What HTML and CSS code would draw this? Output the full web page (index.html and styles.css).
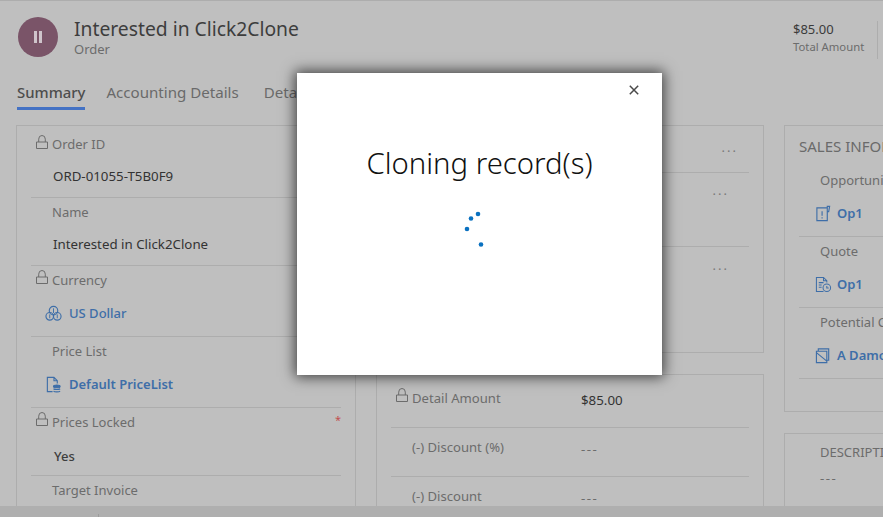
FILE: index.html
```html
<!DOCTYPE html>
<html lang="en">
<head>
<meta charset="utf-8">
<title>Interested in Click2Clone</title>
<link rel="stylesheet" href="styles.css">
</head>
<body>
<svg class="defs" width="0" height="0" aria-hidden="true">
  <symbol id="lock" viewBox="0 0 12 14"><path d="M.5 7h11v6.500H.5zM2.700 7V4.200a3.300 3.700 0 0 1 6.600 0V7" fill="none" stroke="currentColor" stroke-width="1"/></symbol>
</svg>
<div class="page">
  <header class="head">
    <div class="avatar"><span class="pause"></span><span class="pause"></span></div>
    <div class="head-title">
      <h1>Interested in Click2Clone</h1>
      <div class="entity">Order</div>
    </div>
    <div class="head-stat">
      <div class="stat-value">$85.00</div>
      <div class="stat-label">Total Amount</div>
    </div>
  </header>
  <nav class="tabs">
    <span class="tab active">Summary</span>
    <span class="tab">Accounting Details</span>
    <span class="tab tab-last">Details</span>
  </nav>
  <main class="columns">
    <section class="col">
      <div class="card card-a">
        <div class="field r72">
          <div class="label"><svg class="lock"><use href="#lock"/></svg>Order ID</div>
          <div class="value">ORD-01055-T5B0F9</div>
        </div>
        <div class="field r68">
          <div class="label">Name</div>
          <div class="value">Interested in Click2Clone</div>
        </div>
        <div class="field r71">
          <div class="label"><svg class="lock"><use href="#lock"/></svg>Currency</div>
          <div class="value link">
            <svg class="ent" viewBox="0 0 18 18" fill="none" stroke="currentColor" stroke-width="1.200"><circle cx="9" cy="6" r="4.500"/><circle cx="5" cy="12" r="4"/><circle cx="13" cy="12" r="4"/><path d="M9 3.500v5M5 10v4M13 10v4" stroke-width="1"/></svg>
            US Dollar
          </div>
        </div>
        <div class="field r71">
          <div class="label">Price List</div>
          <div class="value link strong">
            <svg class="ent" viewBox="0 0 18 18" fill="none" stroke="currentColor" stroke-width="1.200"><path d="M8 16.500H2.500V1.500h7l3.500 3.500v3M9.500 1.500V5H13"/><ellipse cx="12.500" cy="11" rx="3.500" ry="1.500" fill="currentColor"/><path d="M9 13.500c1 1 6 1 7 0M9 16c1 1 6 1 7 0" /></svg>
            Default PriceList
          </div>
        </div>
        <div class="field r68">
          <div class="label"><svg class="lock"><use href="#lock"/></svg>Prices Locked<span class="req">*</span></div>
          <div class="value yes">Yes</div>
        </div>
        <div class="field last">
          <div class="label">Target Invoice</div>
        </div>
      </div>
    </section>
    <section class="col stack-a">
      <div class="card card-b">
        <div class="more-row first"><span class="more">...</span></div>
        <div class="more-row second"><span class="more">...</span></div>
        <div class="more-row third"><span class="more">...</span></div>
      </div>
      <div class="card card-c">
        <div class="pair">
          <div class="pair-label"><svg class="lock lock-pair"><use href="#lock"/></svg>Detail Amount</div>
          <div class="pair-value">$85.00</div>
        </div>
        <div class="pair">
          <div class="pair-label">(-) Discount (%)</div>
          <div class="pair-value muted">---</div>
        </div>
        <div class="pair last">
          <div class="pair-label">(-) Discount</div>
          <div class="pair-value muted">---</div>
        </div>
      </div>
    </section>
    <section class="col stack-b">
      <div class="card card-d">
        <h2>SALES INFORMATION</h2>
        <div class="side">
          <div class="label">Opportunity</div>
          <div class="value link strong">
            <svg class="ent" viewBox="0 0 18 18" fill="none" stroke="currentColor" stroke-width="1.200"><path d="M13 3H2v13.500h11zM13 7h1.500l1-5.500h-2.500z"/><path d="M7.500 6.500v5M7.500 13v1.200"/></svg>
            Op1
          </div>
        </div>
        <div class="side">
          <div class="label">Quote</div>
          <div class="value link strong">
            <svg class="ent" viewBox="0 0 18 18" fill="none" stroke="currentColor" stroke-width="1.100"><path d="M9 16.500H1.500V1.500H9l3.500 3.500v2M9 1.500V5h3.500"/><path d="M4 7h5M4 9.500h3M4 12h3"/><circle cx="12.500" cy="12.500" r="4"/><path d="M12.500 10.500v2.200h2"/></svg>
            Op1
          </div>
        </div>
        <div class="side">
          <div class="label">Potential Customer</div>
          <div class="value link strong">
            <svg class="ent" viewBox="0 0 18 18" fill="none" stroke="currentColor" stroke-width="1.200"><path d="M1.500 4.500h11v12h-11zM3.500 4.500V2h11v12h-2M1.500 6l11 9"/></svg>
            A Damon
          </div>
        </div>
      </div>
      <div class="card card-e">
        <div class="label">DESCRIPTION</div>
        <div class="value muted">---</div>
      </div>
    </section>
  </main>
  <footer class="foot"><span class="foot-tick"></span></footer>
</div>
<div class="dialog" role="dialog">
  <button class="close" aria-label="Close"><svg viewBox="0 0 10 10" width="10" height="10"><path d="M.8.8l8.400 8.400M9.200.8L.8 9.200" stroke="currentColor" stroke-width="1.500" fill="none"/></svg></button>
  <div class="dialog-title">Cloning record(s)</div>
  <svg class="spinner" viewBox="0 0 24 36" width="24" height="36"><circle cx="15" cy="3" r="2.300"/><circle cx="8" cy="7.500" r="2.300"/><circle cx="4" cy="18" r="2.300"/><circle cx="18" cy="33.500" r="2.300"/></svg>
</div>
</body>
</html>
```
FILE: styles.css
```css
* { box-sizing: border-box; }
html, body { margin: 0; height: 517px; width: 883px; overflow: hidden; }
body { background: #bfbfbf; color: #3b3b3b; font-family: "Noto Sans", "Open Sans", "Liberation Sans", sans-serif; position: relative; }
.defs { position: absolute; }
.page { height: 517px; width: 883px; display: flex; flex-direction: column; border-top: 1px solid #adadad; }

.head { display: flex; align-items: flex-start; height: 68px; padding: 16px 0 0 18px; flex: none; }
.avatar { width: 40px; height: 40px; border-radius: 50%; background: #7a5468; display: flex; align-items: center; justify-content: center; gap: 2px; flex: none; }
.pause { width: 3px; height: 12px; background: #cfc4cb; }
.head-title { margin-left: 16px; }
h1 { margin: 0; font-size: 19.300px; line-height: 24px; font-weight: 400; color: #3d3d3d; }
.entity { font-size: 13px; line-height: 17px; color: #6c6c6c; }
.head-stat { margin: 4px 5px 0 auto; width: 85px; height: 38px; border-right: 1px solid #adadad; }
.stat-value { font-size: 13px; line-height: 16px; color: #3b3b3b; }
.stat-label { font-size: 11.300px; line-height: 20px; color: #6c6c6c; }

.tabs { display: flex; gap: 21px; height: 56px; padding: 12px 0 0 17px; flex: none; }
.tab { font-size: 15.100px; line-height: 22px; height: 29px; color: #6a6a6a; white-space: nowrap; }
.tab.active { font-size: 14.900px; color: #4d4d4d; font-weight: 500; border-bottom: 3px solid #4472c4; }
.tab-last { margin-left: 4px; }

.columns { flex: 1; min-height: 0; overflow: hidden; display: grid; grid-template-columns: 340px 388px 200px; column-gap: 20px; margin-left: 16px; }
.col { min-width: 0; display: flex; flex-direction: column; }
.card { border: 1px solid #adadad; flex: none; }
.card-a { height: 400px; padding: 0 14px; }
.field { border-bottom: 1px solid #adadad; }
.field.last { border-bottom: 0; }
.r72 { height: 72px; }
.r68 { height: 68px; }
.r71 { height: 71px; }
.label { font-size: 13px; line-height: 18px; color: #6c6c6c; position: relative; padding-left: 21px; padding-top: 5px; white-space: nowrap; }
.field:first-child .label { padding-top: 9px; }
.lock { position: absolute; left: 5px; top: 4px; width: 12px; height: 14px; color: #6c6c6c; }
.field:first-child .lock { top: 9px; }
.value { font-size: 13.300px; line-height: 18px; color: #333; padding-left: 22px; margin-top: 14px; white-space: nowrap; }
.link { font-size: 13px; color: #3e6ea8; font-weight: 500; display: flex; align-items: center; gap: 7px; padding-left: 14px; margin-top: 15px; }
.strong { font-weight: 600; }
.field .yes { padding-left: 23px; margin-top: 16px; font-size: 13px; font-weight: 500; color: #3d3d3d; }
.req { position: absolute; right: 0; top: 3px; color: #c25050; font-size: 11px; }
.ent { width: 17px; height: 17px; flex: none; }

.stack-a, .stack-b { gap: 21px; }
.card-b { height: 228px; padding: 0 14px; }
.more-row { display: flex; justify-content: flex-end; color: #7a7a7a; }
.more { font-size: 13px; line-height: 14px; letter-spacing: 2px; }
.more-row.first { height: 47px; padding: 14px 11px 0 0; border-bottom: 1px solid #adadad; }
.more-row.second { height: 74px; padding: 10px 20px 0 0; border-bottom: 1px solid #adadad; }
.more-row.third { padding: 11px 20px 0 0; }
.card-c { height: 140px; padding: 0 14px; }
.pair { height: 49px; display: flex; border-bottom: 1px solid #adadad; padding-top: 9px; position: relative; }
.pair:first-child { height: 53px; padding-top: 13px; }
.pair.last { border-bottom: 0; }
.pair-label { width: 190px; padding-left: 21px; font-size: 13.100px; line-height: 20px; color: #6c6c6c; position: relative; white-space: nowrap; }
.lock-pair { left: 5px; top: 0; }
.pair-value { font-size: 13.300px; line-height: 18px; padding-top: 3px; color: #333; }
.pair-value.muted, .value.muted { letter-spacing: 1.500px; }
.muted { color: #6c6c6c; }

.card-d { height: 287px; padding: 0 0 0 14px; border-right: 0; }
h2 { margin: 0; font-size: 15px; line-height: 20px; font-weight: 400; color: #6a6a6a; padding-top: 10px; height: 40px; white-space: nowrap; }
.side { height: 71px; border-bottom: 1px solid #adadad; }
.side .label { padding-top: 5px; }
.side .link { margin-top: 15px; padding-left: 16px; gap: 5px; }
.card-e { border-right: 0; padding-top: 9px; height: 80px; }
.card-e .label { padding-left: 35px; padding-top: 0; }
.card-e .value { padding-left: 35px; margin-top: 8px; }

.foot { height: 11px; flex: none; background: #afafaf; position: relative; }
.foot-tick { display: block; width: 1px; height: 3px; margin: 8px 0 0 98px; background: #9c9c9c; }

.dialog { position: absolute; left: 297px; top: 73px; width: 365px; height: 302px; background: #fff; box-shadow: 0 0 13px 2px rgba(0, 0, 0, .68); display: flex; flex-direction: column; align-items: center; }
.close { position: absolute; right: 22px; top: 11px; width: 12px; height: 12px; padding: 1px; border: 0; background: none; color: #4a4a4a; display: flex; }
.dialog-title { margin-top: 71px; font-size: 29.300px; font-weight: 300; line-height: 38px; color: #111; white-space: nowrap; }
.spinner { margin-top: 29px; margin-left: -10px; fill: #0a71c0; }
```
